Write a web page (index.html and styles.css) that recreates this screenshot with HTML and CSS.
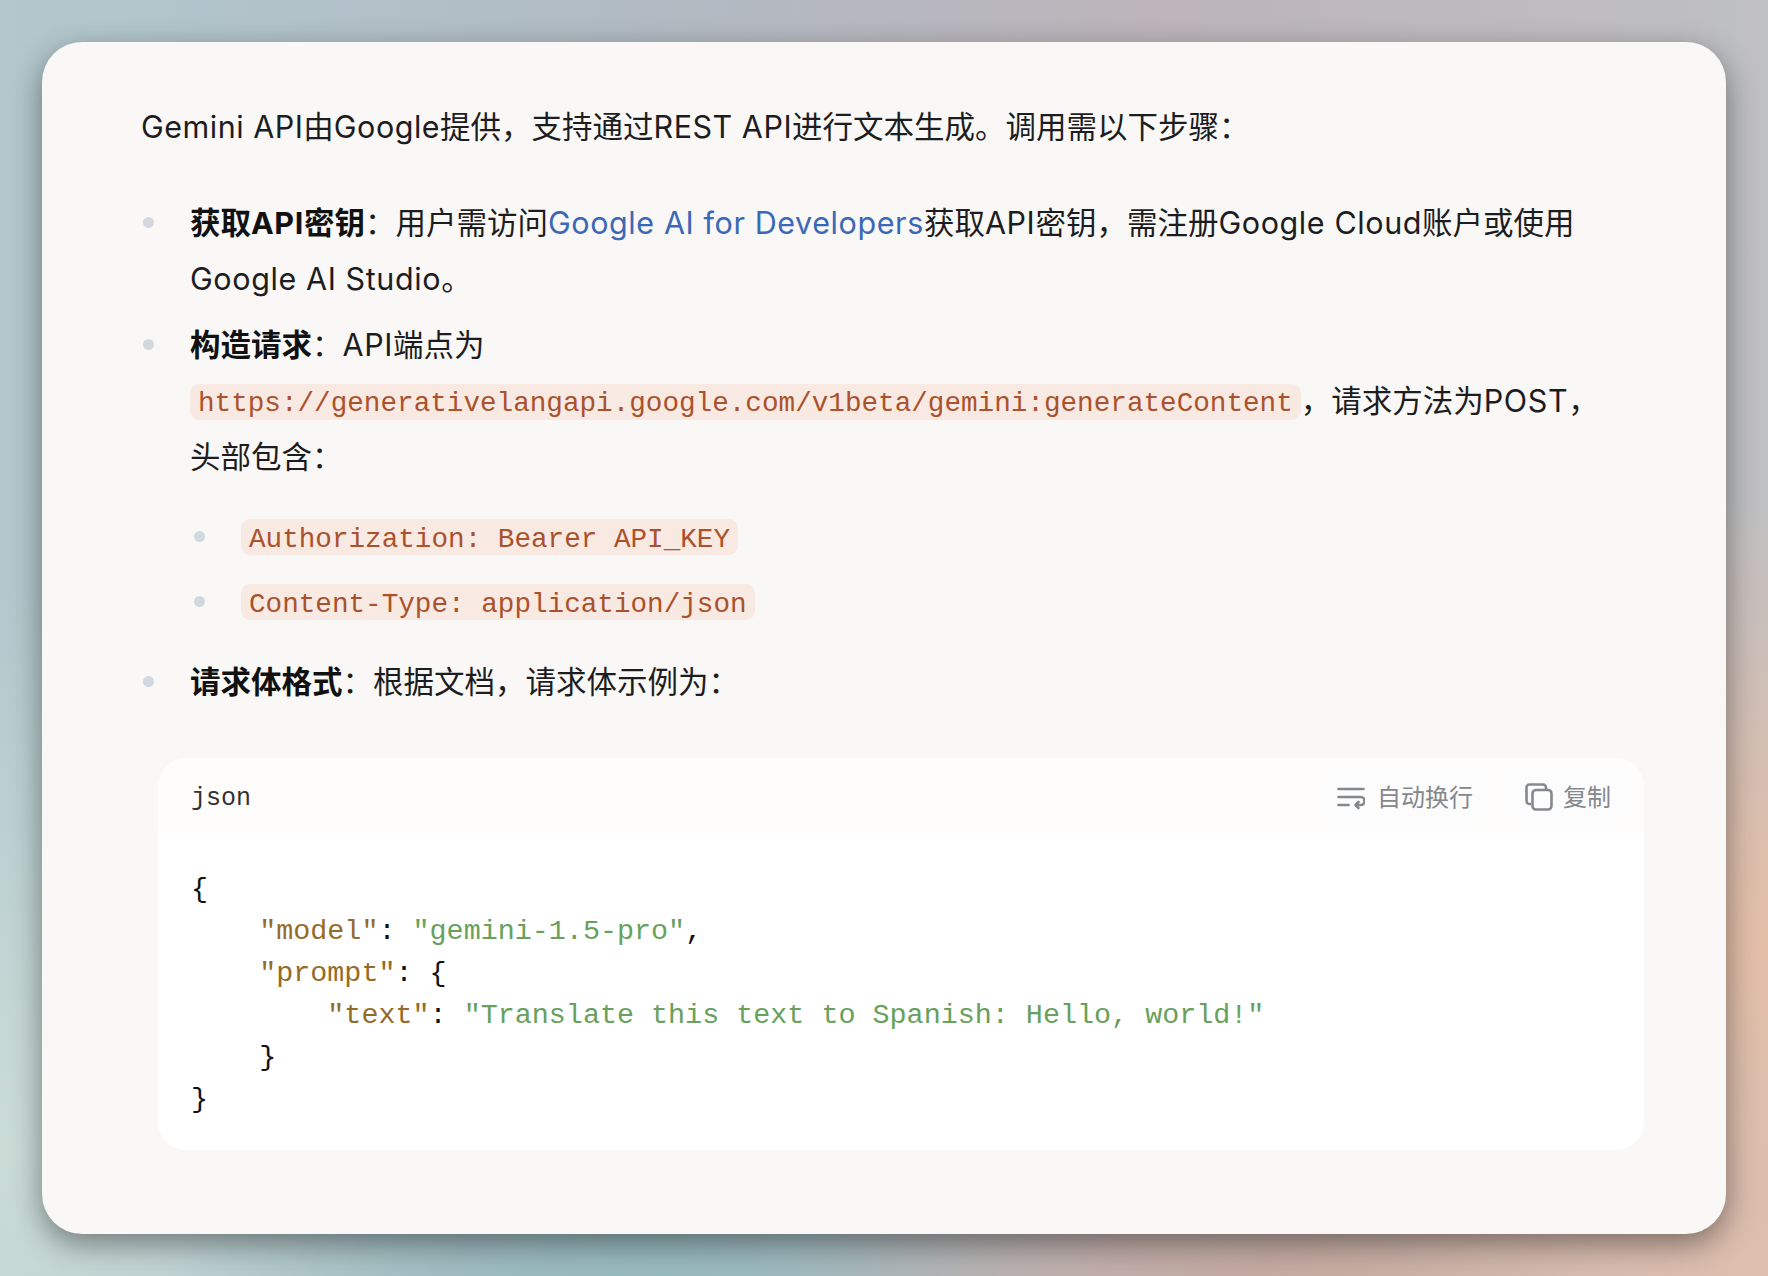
FILE: index.html
```html
<!DOCTYPE html>
<html lang="zh-CN">
<head>
<meta charset="utf-8">
<title>Gemini API</title>
<link rel="stylesheet" href="styles.css">
</head>
<body>
<main class="card">
  <p class="intro"><span class="en">Gemini API</span>由<span class="en">Google</span>提供，支持通过<span class="en">REST API</span>进行文本生成。调用需以下步骤：</p>
  <ul class="list">
    <li class="item"><strong>获取<span class="en">API</span>密钥</strong>：用户需访问<a class="link en" href="#">Google AI for Developers</a>获取<span class="en">API</span>密钥，需注册<span class="en">Google Cloud</span>账户或使用<span class="en">Google AI Studio</span>。</li>
    <li class="item"><strong>构造请求</strong>：<span class="en">API</span>端点为<br><code class="pill">https://generativelangapi.google.com/v1beta/gemini:generateContent</code>，请求方法为<span class="en">POST</span>，头部包含：
      <ul class="sublist">
        <li class="subitem"><code class="pill">Authorization: Bearer API_KEY</code></li>
        <li class="subitem"><code class="pill">Content-Type: application/json</code></li>
      </ul>
    </li>
    <li class="item"><strong>请求体格式</strong>：根据文档，请求体示例为：</li>
  </ul>
  <section class="code-block">
    <header class="code-head">
      <span class="lang">json</span>
      <div class="actions">
        <button class="btn" type="button">
          <svg class="icon" viewBox="0 0 28 28" fill="none" stroke="currentColor" stroke-width="2.600" stroke-linecap="round" stroke-linejoin="round"><path d="M1.500 6h25"/><path d="M1.500 14h22.500a3.500 4 0 0 1 0 8h-5"/><path d="M21.500 19l-3 3 3 3"/><path d="M1.500 22h10"/></svg>
          <span class="btn-label">自动换行</span>
        </button>
        <button class="btn btn-copy" type="button">
          <svg class="icon" viewBox="0 0 28 28" fill="none" stroke="currentColor" stroke-width="2.600" stroke-linejoin="round"><path d="M6 21H4.500a3 3 0 0 1-3-3V4.500a3 3 0 0 1 3-3H18a3 3 0 0 1 3 3V6.500"/><rect x="7.500" y="7" width="19" height="19.500" rx="3.500"/></svg>
          <span class="btn-label">复制</span>
        </button>
      </div>
    </header>
<pre class="code"><span class="p">{</span>
    <span class="k">"model"</span><span class="p">:</span> <span class="s">"gemini-1.5-pro"</span><span class="p">,</span>
    <span class="k">"prompt"</span><span class="p">:</span> <span class="p">{</span>
        <span class="k">"text"</span><span class="p">:</span> <span class="s">"Translate this text to Spanish: Hello, world!"</span>
    <span class="p">}</span>
<span class="p">}</span></pre>
  </section>
</main>
</body>
</html>
```
FILE: styles.css
```css
* { box-sizing: border-box; }
html, body { margin: 0; height: 100%; }
body {
  width: 1768px;
  height: 1276px;
  padding: 42px;
  overflow: hidden;
  font-family: Inter, "Noto Sans CJK SC", sans-serif;
  background:
    radial-gradient(500px 450px at 1768px 950px, #e5bea6 0%, rgba(229,190,166,0) 100%),
    radial-gradient(500px 300px at 1768px 1276px, #dbbfb2 0%, rgba(219,191,178,0) 100%),
    radial-gradient(560px 320px at 1350px 1310px, #c6a89c 0%, rgba(198,168,156,0) 100%),
    radial-gradient(480px 320px at 640px 1310px, #93babd 0%, rgba(147,186,189,0) 100%),
    radial-gradient(480px 560px at 0 1150px, #cbdcd7 0%, rgba(203,220,215,0) 100%),
    linear-gradient(90deg, #b2c8cd 0%, #b1bbc4 35%, #bcb4ba 65%, #bfc0c2 100%);
}
.card {
  width: 1684px;
  height: 1192px;
  padding: 57px 84px 0 99px;
  background: #f9f8f6;
  border-radius: 40px;
  box-shadow: 0 10px 30px rgba(0, 0, 0, .42);
  color: #1d1d1f;
  font-size: 30.5px;
  line-height: 56px;
}
.en { letter-spacing: .6px; }
.intro .en { letter-spacing: .5px; }
.intro { margin: 0 0 40px; }
.list { width: 1464px; margin: 0; padding: 0 0 0 49px; list-style: none; }
.item { position: relative; margin-bottom: 10px; }
.item::before,
.subitem::before {
  content: "";
  position: absolute;
  left: -47px;
  top: 22px;
  width: 11px;
  height: 11px;
  border-radius: 50%;
  background: #d3d8df;
}
strong { font-weight: 700; color: #111; }
.link { color: #3b69b8; text-decoration: none; }
.pill {
  display: inline-block;
  height: 36px;
  padding: 0 8px;
  border-radius: 9px;
  background: #f9e9e3;
  color: #aa522c;
  font-family: "Liberation Mono", monospace;
  font-size: 27.65px;
  line-height: 40px;
  vertical-align: 1px;
}
.sublist { margin: 25px 0 0; padding: 0 0 0 51px; list-style: none; }
.subitem { position: relative; margin-bottom: 9px; line-height: 56px; }
.subitem:last-child { margin-bottom: 23px; }
.subitem .pill { line-height: 42px; vertical-align: 2px; }
.subitem::before { top: 21px; left: -47px; }
.code-block {
  margin: 48px 0 0 17px;
  width: 1486px;
  height: 392px;
  border-radius: 28px;
  background: #fff;
}
.code-head {
  display: flex;
  justify-content: space-between;
  align-items: flex-start;
  height: 76px;
  padding: 8px 16px 0 33px;
  background: #fefdfc;
  border-radius: 28px 28px 0 0;
}
.lang {
  font-family: "Liberation Mono", monospace;
  font-size: 25px;
  line-height: 60px;
  color: #333;
  padding-top: 3px;
}
.actions { display: flex; gap: 16px; }
.btn {
  display: flex;
  align-items: center;
  gap: 12px;
  width: 171px;
  height: 60px;
  padding: 0 17px;
  border: 0;
  border-radius: 15px;
  background: #fcfcfc;
  color: #85888c;
  font-family: "Noto Sans CJK SC", sans-serif;
  font-size: 24px;
}
.btn-copy { width: 121px; padding: 0 16px 0 18px; gap: 10px; }
.btn-label { padding-bottom: 2px; white-space: nowrap; }
.icon { width: 28px; height: 28px; flex: none; margin-top: 2px; }
.code {
  margin: 0;
  padding: 35px 0 0 33px;
  font-family: "Liberation Mono", monospace;
  font-size: 28.4px;
  line-height: 42px;
  color: #111;
}
.k { color: #946c28; }
.s { color: #67a15c; }
.p { color: #111; }
```
